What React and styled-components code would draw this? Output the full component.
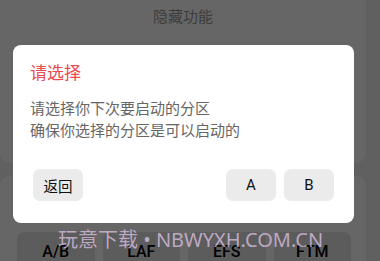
import React from "react";
import styled, { createGlobalStyle } from "styled-components";

const Global = createGlobalStyle`
  html, body { margin: 0; padding: 0; }
  body {
    width: 380px;
    height: 261px;
    overflow: hidden;
    background: #f0f0f0;
    font-family: "Noto Sans", "Noto Sans CJK SC", sans-serif;
  }
`;

const Page = styled.div`
  position: relative;
  width: 380px;
  height: 261px;
  overflow: hidden;
  display: flex;
  flex-direction: column;
  gap: 13px;
  padding-right: 14px;
  box-sizing: border-box;
`;

const Card = styled.div`
  background: #ffffff;
  border-radius: ${(p) => (p.$top ? "0 0 10px 10px" : "10px")};
  height: ${(p) => p.$h}px;
  flex-shrink: 0;
  box-sizing: border-box;
  display: flex;
  flex-direction: column;
  padding: ${(p) => p.$pad};
`;

const CardTitle = styled.div`
  text-align: center;
  font-size: 15px;
  line-height: 20px;
  color: #999999;
  padding-top: 6px;
`;

const FnRow = styled.div`
  display: grid;
  grid-template-columns: repeat(4, 1fr);
  gap: 8px;
`;

const FnButton = styled.div`
  height: 40px;
  background: #e6e6e6;
  border-radius: 8px;
  display: flex;
  align-items: flex-start;
  justify-content: center;
  padding-top: 11px;
  box-sizing: border-box;
  font-family: "Roboto", "Noto Sans", sans-serif;
  font-size: 16px;
  line-height: 18px;
  font-weight: 500;
  color: #000;
`;

const Overlay = styled.div`
  position: absolute;
  inset: 0;
  background: rgba(0, 0, 0, 0.6);
`;

const Dialog = styled.div`
  position: absolute;
  left: 13px;
  top: 45px;
  width: 341px;
  height: 178px;
  background: #ffffff;
  border-radius: 8px;
  box-sizing: border-box;
  padding: 16px 20px 22px 17px;
  display: flex;
  flex-direction: column;
`;

const DialogTitle = styled.div`
  font-size: 17px;
  line-height: 24px;
  color: #ea4a50;
`;

const DialogBody = styled.div`
  margin-top: 12px;
  font-size: 15px;
  line-height: 22px;
  color: #666666;
`;

const Actions = styled.div`
  margin-top: auto;
  display: flex;
  gap: 8px;
  padding-left: 3px;
`;

const Spacer = styled.div`
  flex: 1;
`;

const Btn = styled.button`
  width: 50px;
  height: 32px;
  border: none;
  border-radius: 7px;
  background: #ebebeb;
  color: #111;
  font-family: "Roboto", "Noto Sans", "Noto Sans CJK SC", sans-serif;
  font-size: ${(p) => (p.$cjk ? "14.5px" : "15px")};
  padding: 0;
  display: flex;
  align-items: center;
  justify-content: center;
`;

const Watermark = styled.div`
  position: absolute;
  left: 58px;
  top: 226px;
  font-size: 20px;
  line-height: 28px;
  white-space: nowrap;
  color: rgba(214, 190, 222, 0.8);
  font-family: "Noto Sans", "Noto Sans CJK SC", sans-serif;
  pointer-events: none;
`;

export default function App() {
  return (
    <>
      <Global />
      <Page>
        <Card $top $h={163} $pad="0">
          <CardTitle>隐藏功能</CardTitle>
        </Card>
        <Card $h={120} $pad="56px 15px 0 17px">
          <FnRow>
            <FnButton>A/B</FnButton>
            <FnButton>LAF</FnButton>
            <FnButton>EFS</FnButton>
            <FnButton>FTM</FnButton>
          </FnRow>
        </Card>
        <Overlay />
        <Dialog>
          <DialogTitle>请选择</DialogTitle>
          <DialogBody>
            请选择你下次要启动的分区
            <br />
            确保你选择的分区是可以启动的
          </DialogBody>
          <Actions>
            <Btn $cjk>返回</Btn>
            <Spacer />
            <Btn>A</Btn>
            <Btn>B</Btn>
          </Actions>
        </Dialog>
        <Watermark>玩意下载 • NBWYXH.COM.CN</Watermark>
      </Page>
    </>
  );
}
